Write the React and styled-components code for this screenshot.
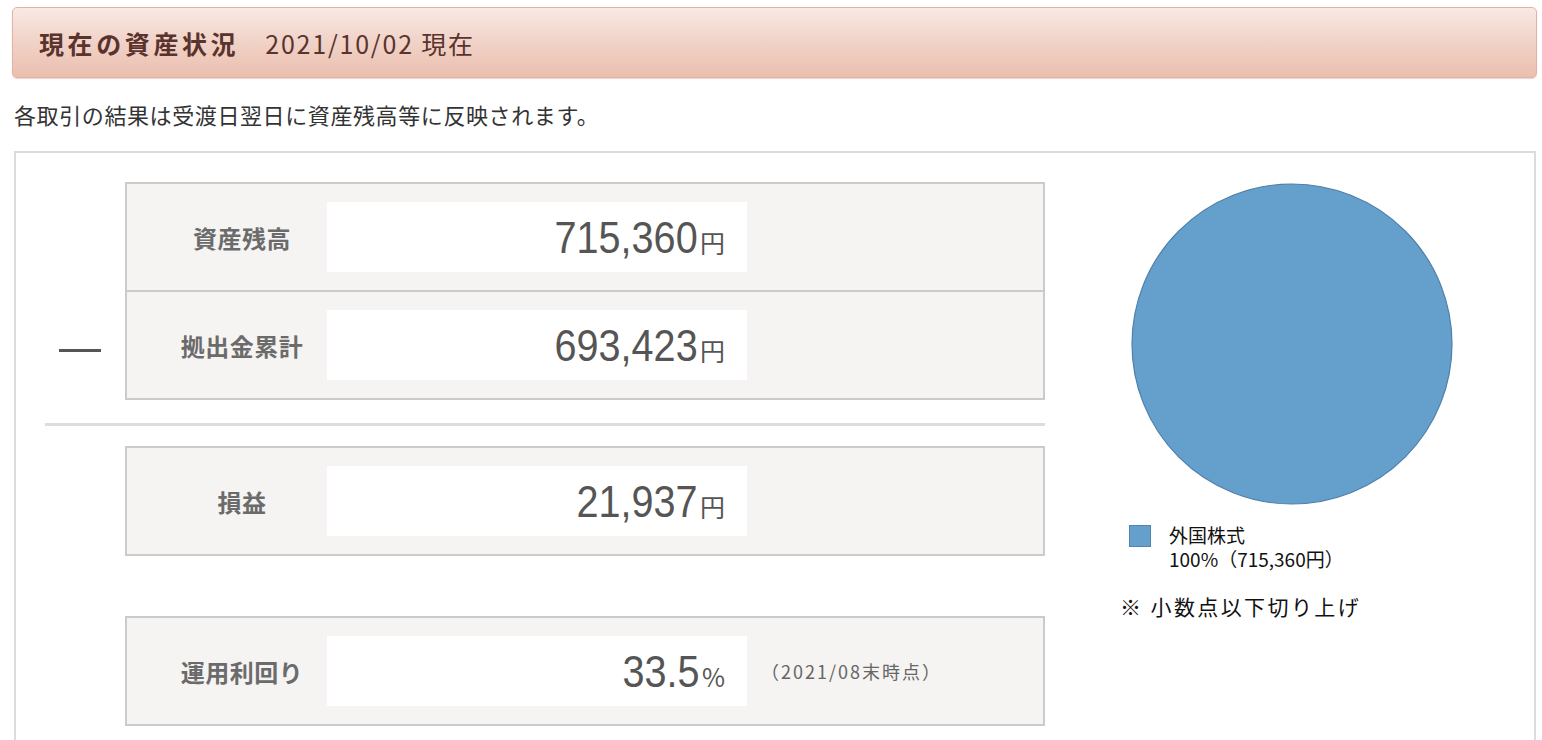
import React from "react";
import styled, { createGlobalStyle } from "styled-components";

const GlobalStyle = createGlobalStyle`
  body {
    margin: 0;
    background: #fff;
    font-family: "Noto Sans CJK JP", "Liberation Sans", sans-serif;
  }
`;

const Page = styled.div`
  padding: 7px 5px 0 12px;
`;

const Header = styled.div`
  height: 69px;
  display: flex;
  align-items: center;
  padding-left: 26px;
  border: 1px solid #e4b2a2;
  border-radius: 5px;
  background: linear-gradient(#f8e9e4 0%, #f1d4ca 45%, #ebbfae 100%);
  box-shadow: 0 1px 1px rgba(160, 90, 70, 0.25);
  color: #5a332d;
`;

const Title = styled.h1`
  margin: 0 26px 0 0;
  font-size: 25px;
  font-weight: 700;
  letter-spacing: 3.6px;
`;

const DateText = styled.span`
  font-size: 25px;
  letter-spacing: 1.8px;
`;

const Notice = styled.p`
  margin: 21px 0 22px 2px;
  font-size: 22px;
  line-height: 30px;
  letter-spacing: 0.6px;
  color: #333;
`;

const Panel = styled.div`
  display: flex;
  margin: 0 1px 0 2px;
  padding: 29px 0 40px;
  border: 2px solid #dcdcdc;
`;

const Summary = styled.div`
  width: 1029px;
`;

const Block = styled.div`
  display: flex;
  margin-top: ${(p) => p.gap || 0}px;
`;

const SignCol = styled.div`
  width: 109px;
  display: flex;
  align-items: flex-end;
  padding-bottom: 48px;
  box-sizing: border-box;
`;

const Minus = styled.div`
  width: 42px;
  height: 3px;
  margin-left: 43px;
  background: #555;
`;

const Box = styled.div`
  width: 920px;
  box-sizing: border-box;
  border: 2px solid #cbcbcb;
  background: #f5f4f2;
`;

const Row = styled.div`
  display: flex;
  align-items: center;
  height: 106px;
  & + & {
    border-top: 2px solid #cbcbcb;
  }
`;

const Label = styled.div`
  width: 200px;
  padding-left: 30px;
  box-sizing: border-box;
  text-align: center;
  font-size: 24px;
  font-weight: 700;
  letter-spacing: 0.5px;
  color: #6b6b6b;
`;

const ValueBox = styled.div`
  width: 420px;
  height: 70px;
  box-sizing: border-box;
  padding-right: 22px;
  display: flex;
  align-items: center;
  justify-content: flex-end;
  background: #fff;
`;

const Amount = styled.div`
  display: flex;
  align-items: baseline;
  color: #555;
`;

const Num = styled.span`
  display: inline-block;
  font-family: "Liberation Sans", sans-serif;
  font-size: 45px;
  line-height: 1;
  transform: scaleX(0.88);
  transform-origin: right center;
`;

const Unit = styled.span`
  margin-left: 2px;
  font-size: 25px;
  line-height: 1;
`;

const AsOf = styled.span`
  margin-left: 14px;
  font-size: 18px;
  letter-spacing: 2px;
  color: #666;
`;

const Divider = styled.div`
  height: 3px;
  margin: 23px 0 20px 29px;
  background: #dddddd;
`;

const ChartCol = styled.div`
  flex: 1;
  display: flex;
  flex-direction: column;
  padding-left: 5px;
`;

const Pie = styled.svg`
  align-self: center;
  display: block;
`;

const Legend = styled.div`
  display: flex;
  align-items: flex-start;
  margin: 17px 0 0 79px;
`;

const Swatch = styled.div`
  width: 22px;
  height: 22px;
  box-sizing: border-box;
  margin-top: 2px;
  border: 1px solid #4f84b3;
  background: #659fcc;
`;

const LegendText = styled.div`
  margin-left: 18px;
  color: #111;
  font-size: 19px;
  line-height: 24px;
`;

const Footnote = styled.div`
  margin: 20px 0 0 70px;
  font-size: 21px;
  letter-spacing: 2.4px;
  color: #111;
`;

const rows = [
  {
    gap: 0,
    sign: true,
    items: [
      { label: "資産残高", value: "715,360", unit: "円" },
      { label: "拠出金累計", value: "693,423", unit: "円" },
    ],
  },
];

const ItemRow = ({ label, value, unit, note }) => (
  <Row>
    <Label>{label}</Label>
    <ValueBox>
      <Amount>
        <Num>{value}</Num>
        <Unit>{unit}</Unit>
      </Amount>
    </ValueBox>
    {note && <AsOf>{note}</AsOf>}
  </Row>
);

export default function App() {
  return (
    <>
      <GlobalStyle />
      <Page>
        <Header>
          <Title>現在の資産状況</Title>
          <DateText>2021/10/02 現在</DateText>
        </Header>
        <Notice>各取引の結果は受渡日翌日に資産残高等に反映されます。</Notice>
        <Panel>
          <Summary>
            {rows.map((b, i) => (
              <Block key={i}>
                <SignCol>{b.sign && <Minus />}</SignCol>
                <Box>
                  {b.items.map((it) => (
                    <ItemRow key={it.label} {...it} />
                  ))}
                </Box>
              </Block>
            ))}
            <Divider />
            <Block>
              <SignCol />
              <Box>
                <ItemRow label="損益" value="21,937" unit="円" />
              </Box>
            </Block>
            <Block gap={60}>
              <SignCol />
              <Box>
                <ItemRow
                  label="運用利回り"
                  value="33.5"
                  unit="%"
                  note="（2021/08末時点）"
                />
              </Box>
            </Block>
          </Summary>
          <ChartCol>
            <Pie width="324" height="324" viewBox="0 0 324 324">
              <circle
                cx="162"
                cy="162"
                r="160"
                fill="#659fcc"
                stroke="#4f7fa8"
                strokeWidth="1.2"
              />
            </Pie>
            <Legend>
              <Swatch />
              <LegendText>
                外国株式
                <br />
                100%（715,360円）
              </LegendText>
            </Legend>
            <Footnote>※ 小数点以下切り上げ</Footnote>
          </ChartCol>
        </Panel>
      </Page>
    </>
  );
}
